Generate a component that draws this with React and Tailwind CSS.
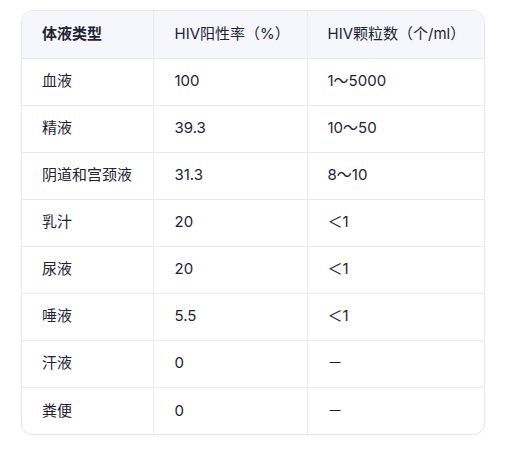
const rows = [
  ["血液", "100", "1～5000"],
  ["精液", "39.3", "10～50"],
  ["阴道和宫颈液", "31.3", "8～10"],
  ["乳汁", "20", "＜1"],
  ["尿液", "20", "＜1"],
  ["唾液", "5.5", "＜1"],
  ["汗液", "0", "－"],
  ["粪便", "0", "－"],
];

export default function App() {
  return (
    <div
      className="min-h-[456px] bg-white pt-[10px] pl-[21px] text-[15px] text-[#1e2235]"
      style={{ fontFamily: "Inter, 'Noto Sans CJK SC', sans-serif" }}
    >
      <div className="w-[464px] overflow-hidden rounded-xl border border-[#e6e8ee] shadow-[0_1px_2px_rgba(0,0,0,0.03)]">
        <table className="w-full table-fixed border-collapse">
          <colgroup>
            <col className="w-[131px]" />
            <col className="w-[154px]" />
            <col />
          </colgroup>
          <thead>
            <tr className="h-[47px] bg-[#f5f7fc]">
              <th className="pl-[20px] text-left font-semibold">体液类型</th>
              <th className="border-l border-[#e8eaf0] pl-[21px] text-left font-normal">HIV阳性率（%）</th>
              <th className="border-l border-[#e8eaf0] pl-[20px] text-left font-normal">HIV颗粒数（个/ml）</th>
            </tr>
          </thead>
          <tbody>
            {rows.map((r, i) => (
              <tr key={i} className="h-[47px] border-t border-[#e8eaf0]">
                <td className="pl-[20px]">{r[0]}</td>
                <td className="border-l border-[#e8eaf0] pl-[21px]">{r[1]}</td>
                <td className="border-l border-[#e8eaf0] pl-[20px]">{r[2]}</td>
              </tr>
            ))}
          </tbody>
        </table>
      </div>
    </div>
  );
}
